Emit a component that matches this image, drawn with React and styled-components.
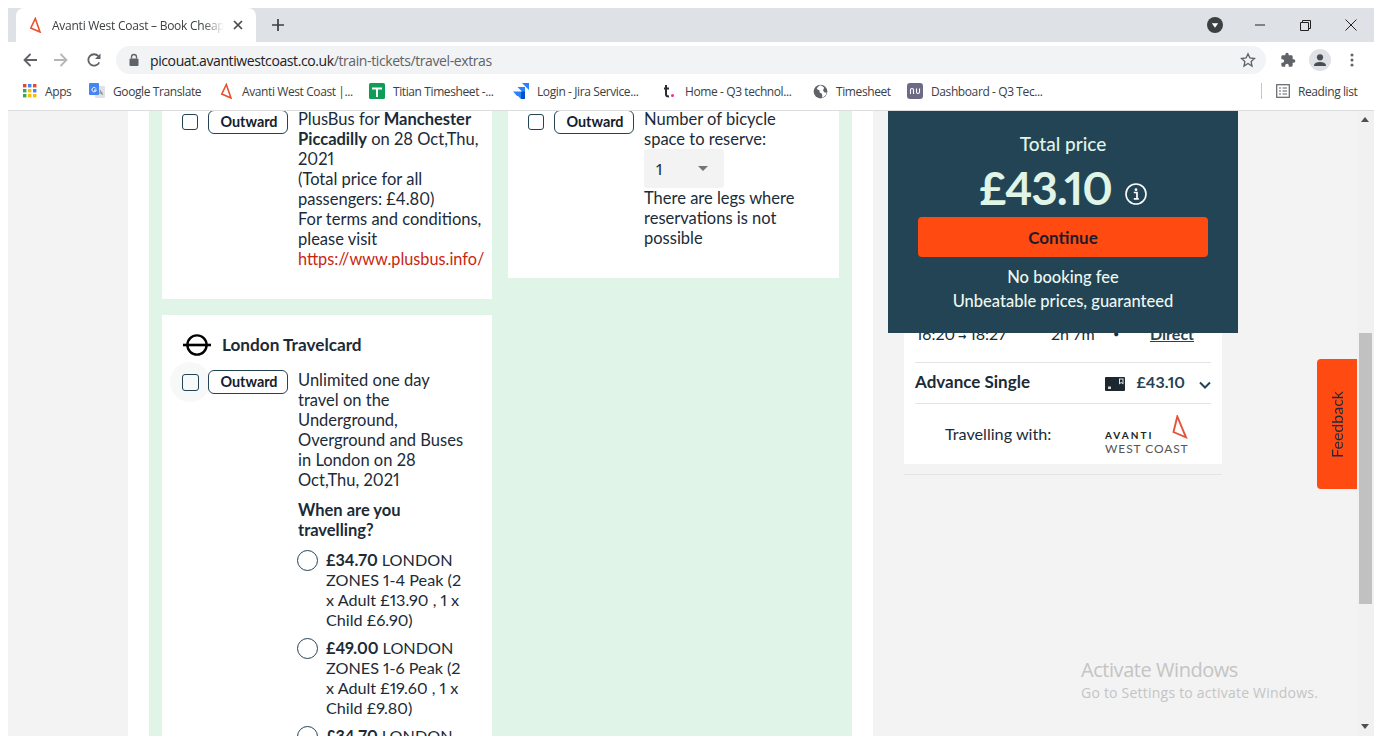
import React from 'react';
import styled, { createGlobalStyle } from 'styled-components';

const Global = createGlobalStyle`
  html, body { margin: 0; padding: 0; background: #fff; height: 100%; overflow: hidden; }
  body { font-family: "Lato", "Liberation Sans", sans-serif; }
`;

const Frame = styled.div`
  width: 1382px; height: 744px; padding: 8px 8px 8px 8px; box-sizing: border-box;
  display: flex; flex-direction: column; position: relative; overflow: hidden;
`;

/* ---------- browser chrome ---------- */
const TabStrip = styled.div`
  height: 34px; background: #dee1e6; display: flex; align-items: stretch; padding-left: 8px; flex: none;
`;
const Tab = styled.div`
  width: 240px; background: #fff; border-radius: 8px 8px 0 0; display: flex; align-items: center;
  padding: 0 10px 0 11px; box-sizing: border-box; position: relative;
`;
const TabTitle = styled.span`
  font: 12px "Open Sans", sans-serif; color: #3c4043; margin-left: 9px; width: 172px; white-space: nowrap; overflow: hidden;
  -webkit-mask-image: linear-gradient(90deg, #000 88%, transparent);
  mask-image: linear-gradient(90deg, #000 88%, transparent);
  letter-spacing: -0.25px;
`;
const IconSlot = styled.span`
  display: inline-flex; align-items: center; justify-content: center; flex: none;
  width: ${p => p.$w || 16}px; height: ${p => p.$h || 16}px; margin-left: ${p => p.$ml || 0}px;
`;
const StarSlot = styled(IconSlot)`
  margin-left: auto;
`;
const WindowControls = styled.div`
  margin-left: auto; display: flex; align-items: center; padding-right: 17px;
`;
const Toolbar = styled.div`
  height: 36px; display: flex; align-items: center; padding: 0 0 0 14px; box-sizing: border-box; background: #fff; flex: none;
`;
const Omnibox = styled.div`
  width: 1150px; height: 28px; border-radius: 14px; background: #f1f3f4; margin-left: 14px;
  display: flex; align-items: center; padding: 0 10px 0 12px; box-sizing: border-box;
`;
const Url = styled.span`
  font: 14px "Open Sans", sans-serif; color: #202124; margin-left: 10px; letter-spacing: -0.4px; white-space: nowrap;
  span { color: #5f6368; }
`;
const Bookmarks = styled.div`
  height: 33px; display: flex; align-items: center; padding: 0 0 6px 15px; border-bottom: 1px solid #dadce0; flex: none; background: #fff; box-sizing: border-box;
`;
const Bookmark = styled.div`
  display: flex; align-items: center; margin-right: ${p => p.$mr ?? 16}px; margin-left: ${p => p.$ml || 0}px; flex: none;
`;
const BookmarkText = styled.span`
  font: 12px "Open Sans", sans-serif; color: #3c4043; margin-left: 8px; width: ${p => p.$w}px; white-space: nowrap; letter-spacing: -0.4px;
`;
const Separator = styled.div`
  width: 1px; height: 16px; background: #c4c7c9; margin-left: auto;
`;

/* ---------- page ---------- */
const Viewport = styled.div`
  flex: 1; min-height: 0; display: flex; position: relative; overflow: hidden; color: #1b2b38;
  font-size: 16.5px; line-height: 20px; font-variant-numeric: proportional-nums;
`;
const Gutter = styled.div`
  width: 120px; background: #f3f3f3; flex: none;
`;
const Main = styled.div`
  width: 745px; background: #fff; padding: 0 21px; box-sizing: border-box; flex: none;
`;
const Green = styled.div`
  height: 100%; background: #e0f4e8; padding: 0 13px; box-sizing: border-box; display: flex; gap: 16px; align-items: flex-start;
`;
const Column = styled.div`
  width: ${p => p.$w}px; display: flex; flex-direction: column; gap: 16px; flex: none;
`;
const Card = styled.div`
  background: #fff; padding: ${p => p.$pad}; margin-top: ${p => p.$mt || 0}px; display: flex; flex-direction: column;
`;
const TitleRow = styled.div`
  display: flex; align-items: center; gap: 11px; font-weight: 700; font-size: 17.2px; margin: 0 0 14px 1px;
`;
const Row = styled.div`
  display: flex; align-items: flex-start;
`;
const Check = styled.span`
  width: 16px; height: 16px; border: 1.5px solid #224455; border-radius: 3px; box-sizing: border-box; flex: none; margin-top: 4px; background: #fff; position: relative;
  ${p => p.$halo && `
    &::before { content: ""; position: absolute; left: -13.5px; top: -13.5px; width: 40px; height: 40px; border-radius: 50%; background: #f6f9f8; }
    &::after { content: ""; position: absolute; inset: -1.5px; border: 1.5px solid #224455; border-radius: 3px; background: #f8faf9; }
  `}
`;
const Badge = styled.span`
  width: 80px; height: 24px; margin: 0 10px; border: 1px solid #224455; border-radius: 6px; box-sizing: border-box; flex: none; position: relative; background: #fff;
  display: flex; align-items: center; justify-content: center; font-size: 14.4px; font-weight: 700; color: #14202c; padding-left: 2px;
`;
const Text = styled.div`
  white-space: nowrap; width: 194px; flex: none; margin-top: ${p => p.$mt || 0}px;
`;
const Link = styled.span`
  color: #c9260f; font-size: 16.3px;
`;
const Question = styled.div`
  font-weight: 700; margin: 10px 0;
`;
const Option = styled.div`
  display: flex; gap: 8px; margin-bottom: 8px; font-size: 16.2px;
`;
const Radio = styled.span`
  width: 21px; height: 21px; border: 1.5px solid #224455; border-radius: 50%; box-sizing: border-box; flex: none; margin-left: -1px;
`;
const Select = styled.div`
  width: 80px; height: 39px; background: #f3f3f3; border-radius: 3px; display: flex; align-items: center; padding-left: 12px; box-sizing: border-box; position: relative; font-size: 16px;
  &::after { content: ""; position: absolute; left: 54px; top: 17px; border: 5px solid transparent; border-top: 5px solid #757575; border-bottom: 0; }
`;

const Sidebar = styled.div`
  width: 484px; background: #f3f3f3; flex: none; padding-left: 31px; box-sizing: border-box; position: relative;
`;
const Summary = styled.div`
  width: 318px; background: #fff; padding: 213px 11px 0; box-sizing: border-box; height: 353px;
`;
const JourneyRow = styled.div`
  display: flex; align-items: center; height: 20px; padding-left: 1px; margin-bottom: 18px; font-size: 16px;
`;
const JourneyCell = styled.span`
  width: ${p => p.$w}px; flex: none; white-space: nowrap; font-size: ${p => p.$fs || 16}px;
`;
const TimeArrow = styled.span`
  font: 700 10px "DejaVu Sans", sans-serif; margin: 0 3px;
`;
const Direct = styled.span`
  font-weight: 700; text-decoration: underline; color: #224455;
`;
const FareRow = styled.div`
  display: flex; align-items: center; height: 40px; border-top: 1px solid #e4e4e4; border-bottom: 1px solid #e4e4e4; font-weight: 700;
`;
const FareName = styled.span`
  margin-right: auto; font-size: 17px; margin-bottom: 3px;
`;
const RailcardSlot = styled.span`
  display: inline-flex; margin-top: 1px;
`;
const FarePrice = styled.span`
  color: #224455; margin: 0 14px 3px 12px; font-size: 16px;
`;
const ChevronSlot = styled.span`
  display: inline-flex; margin-top: 3px;
`;
const OperatorRow = styled.div`
  display: flex; align-items: center; height: 60px; padding-left: 30px; font-size: 16.2px;
`;
const OperatorLabel = styled.span`
  margin-right: auto;
`;
const Logo = styled.div`
  position: relative; width: 84px; height: 44px; margin-right: 22px; color: #222; flex: none;
  svg { position: absolute; left: 67px; top: 3px; }
`;
const LogoTop = styled.div`
  position: absolute; left: 0; top: 17px; font: 700 10px/12px "Lato", sans-serif; letter-spacing: 2px;
`;
const LogoBottom = styled.div`
  position: absolute; left: 0; top: 30px; font: 400 12px/13px "Lato", sans-serif; letter-spacing: 0.9px; white-space: nowrap; color: #555;
`;
const Rule = styled.div`
  width: 318px; height: 1px; background: #e4e4e4; margin-top: 10px;
`;
const PricePanel = styled.div`
  position: absolute; left: 15px; top: 0; width: 350px; height: 222px; background: #224455; color: #e0f4e8; padding: 21px 30px 0; box-sizing: border-box;
  display: flex; flex-direction: column; align-items: center;
`;
const PanelLabel = styled.div`
  font-size: 19px; line-height: 24px; font-weight: 500;
`;
const PriceLine = styled.div`
  display: flex; justify-content: center; gap: 13px; width: 290px; height: 50px; margin-top: 7px; margin-bottom: 4px;
`;
const Price = styled.span`
  font-size: 46px; line-height: 50px; font-weight: 700; letter-spacing: -1.2px;
`;
const InfoIcon = styled.span`
  display: inline-flex; margin-top: 20px; height: 22px;
`;
const Continue = styled.button`
  width: 290px; height: 40px; background: #ff4b12; border: 0; border-radius: 4px; color: #1b1b2b; font: 700 17px "Lato", sans-serif; flex: none;
`;
const PanelNote = styled.div`
  font-size: 16.5px; line-height: 24px; font-weight: 500; color: #eef8f2;
  margin-top: ${p => p.$mt || 0}px;
`;
const Scrollbar = styled.div`
  width: 17px; background: #f1f1f1; flex: none; position: relative;
`;
const Thumb = styled.div`
  position: absolute; left: 2px; top: 222px; width: 13px; height: 271px; background: #c1c1c1;
`;
const Arrow = styled.div`
  position: absolute; left: 4px; ${p => p.$up ? 'top: 6px; border-bottom: 5px solid #505050;' : 'bottom: 7px; border-top: 5px solid #505050;'}
  border-left: 4.5px solid transparent; border-right: 4.5px solid transparent;
`;
const Feedback = styled.div`
  position: absolute; left: 1309px; top: 248px; width: 40px; height: 130px; background: #ff4b12; border-radius: 4px 0 0 4px;
  display: flex; align-items: center; justify-content: center;
  span { writing-mode: vertical-rl; transform: rotate(180deg); font-size: 16px; color: #1b2b38; }
`;
const Activate = styled.div`
  position: absolute; left: 1073px; top: 546px; color: #c4c4c4; font-family: "Open Sans", sans-serif; white-space: nowrap;
  div:first-child { font-size: 20px; line-height: 26px; letter-spacing: -0.45px; }
  div:last-child { font-size: 14px; line-height: 20px; letter-spacing: 0.22px; }
`;

/* ---------- icons ---------- */
const AvantiMark = ({ s = 16 }) => (
  <svg width={s} height={s} viewBox="0 0 16 16"><path d="M8.3 1.5 L3.8 11 L13 15 Z" fill="none" stroke="#e8502e" strokeWidth="1.6" /></svg>
);
const Back = ({ c = '#5f6368' }) => (
  <svg width="16" height="16" viewBox="0 0 16 16"><path d="M15 8H2.5M8.5 2 2.5 8l6 6" fill="none" stroke={c} strokeWidth="1.8" /></svg>
);
const Forward = () => (
  <svg width="16" height="16" viewBox="0 0 16 16"><path d="M1 8h12.5M7.5 2l6 6-6 6" fill="none" stroke="#b4b7ba" strokeWidth="1.8" /></svg>
);
const Reload = () => (
  <svg width="16" height="16" viewBox="0 0 16 16"><path d="M13.2 10.3A5.7 5.7 0 1 1 12.4 4.3" fill="none" stroke="#5f6368" strokeWidth="1.8" /><path d="M14.5 1.5V7H9z" fill="#5f6368" /></svg>
);
const Lock = () => (
  <svg width="12" height="14" viewBox="0 0 12 14"><rect x="1.5" y="5.5" width="9" height="7.5" rx="1" fill="#5f6368" /><path d="M3.5 5.5V4a2.5 2.5 0 0 1 5 0v1.5" fill="none" stroke="#5f6368" strokeWidth="1.3" /></svg>
);
const Star = () => (
  <svg width="16" height="16" viewBox="0 0 24 24"><path d="M12 2.8l2.9 6.2 6.8.8-5 4.6 1.3 6.7L12 17.2l-6 3.9 1.3-6.7-5-4.6 6.8-.8z" fill="none" stroke="#5f6368" strokeWidth="2" /></svg>
);
const Puzzle = () => (
  <svg width="16" height="16" viewBox="0 0 24 24"><path d="M20.5 11H19V7a2 2 0 0 0-2-2h-4V3.5a2.5 2.5 0 0 0-5 0V5H4a2 2 0 0 0-2 2v3.8h1.5a2.7 2.7 0 0 1 0 5.4H2V20a2 2 0 0 0 2 2h3.8v-1.5a2.7 2.7 0 0 1 5.4 0V22H17a2 2 0 0 0 2-2v-4h1.5a2.5 2.5 0 0 0 0-5z" fill="#5f6368" /></svg>
);
const Avatar = () => (
  <svg width="22" height="22" viewBox="0 0 22 22"><circle cx="11" cy="11" r="11" fill="#dee1e6" /><circle cx="11" cy="8.3" r="3.1" fill="#4a4d51" /><path d="M5 16.5c0-2.6 3.4-3.6 6-3.6s6 1 6 3.6V17H5z" fill="#4a4d51" /></svg>
);
const Dots = () => (
  <svg width="4" height="14" viewBox="0 0 4 14"><circle cx="2" cy="2" r="1.5" fill="#5f6368" /><circle cx="2" cy="7" r="1.5" fill="#5f6368" /><circle cx="2" cy="12" r="1.5" fill="#5f6368" /></svg>
);
const AppsGrid = () => {
  const colors = ['#ea4335', '#4285f4', '#ea4335', '#34a853', '#fbbc05', '#4285f4', '#34a853', '#fbbc05', '#fbbc05'];
  return (
    <svg width="14" height="14" viewBox="0 0 14 14">
      {colors.map((c, i) => <rect key={i} x={(i % 3) * 5} y={Math.floor(i / 3) * 5} width="3.4" height="3.4" fill={c} />)}
    </svg>
  );
};
const Translate = () => (
  <svg width="16" height="16" viewBox="0 0 16 16"><rect x="6" y="3" width="10" height="12" rx="1" fill="#dfe1e5" /><rect x="0" y="0" width="10" height="12" rx="1" fill="#4285f4" /><path d="M7 5.5a2.2 2.2 0 1 0 .3 1.6H5" fill="none" stroke="#fff" strokeWidth="1" /><path d="M11 7l2.5 5M9.5 10h4" stroke="#80868b" strokeWidth="1" /></svg>
);
const Titian = () => (
  <svg width="16" height="16" viewBox="0 0 16 16"><rect width="16" height="16" rx="1.5" fill="#0f9d58" /><path d="M3 5.5h10M8 5.5V14" stroke="#fff" strokeWidth="2" /></svg>
);
const Jira = () => (
  <svg width="16" height="16" viewBox="0 0 16 16"><path d="M9 0h7v7zM4.5 4H12v7.5zM0 8.5h8V16L5 13H4z" fill="#2684ff" /><path d="M8 8.5h4V16H8z" fill="#0052cc" /></svg>
);
const TLogo = () => (
  <svg width="12" height="14" viewBox="0 0 12 14"><path d="M3 1v9.5c0 1.5 1 2 3 2M1 4.5h5" fill="none" stroke="#2b2b36" strokeWidth="2" /><circle cx="9.5" cy="11.5" r="1.5" fill="#ef2f88" /></svg>
);
const Globe = () => (
  <svg width="15" height="15" viewBox="0 0 24 24"><circle cx="12" cy="12" r="11" fill="#5f6368" /><path d="M12 2c-3 1-5 3-6 6l4 2 1 4 3 1 1 4-1 3c4-1 7-4 8-8l-4-1-2-3 2-4c-2-2-4-3-6-4z" fill="#fff" /></svg>
);
const Nu = () => (
  <svg width="16" height="16" viewBox="0 0 16 16"><rect width="16" height="16" rx="3" fill="#6c6a85" /><path d="M3.5 11V7c0-2 3-2 3 0v4M9.5 5.5V9c0 2 3 2 3 0V5.5" fill="none" stroke="#fff" strokeWidth="1.1" /></svg>
);
const ReadingList = () => (
  <svg width="14" height="14" viewBox="0 0 14 14"><rect x=".7" y=".7" width="12.6" height="12.6" fill="none" stroke="#5f6368" strokeWidth="1.2" /><path d="M3 4h2M3 7h2M3 10h2M6.5 4h4.5M6.5 7h4.5M6.5 10h4.5" stroke="#5f6368" strokeWidth="1.2" /></svg>
);
const Roundel = () => (
  <svg width="28" height="22" viewBox="0 0 28 22"><circle cx="14" cy="11" r="9.6" fill="none" stroke="#000" strokeWidth="2.4" /><rect x="0" y="9.7" width="28" height="2.6" fill="#000" /></svg>
);
const Info = () => (
  <svg width="22" height="22" viewBox="0 0 22 22"><circle cx="11" cy="11" r="10" fill="none" stroke="#fff" strokeWidth="1.6" /><circle cx="11" cy="6.7" r="1.4" fill="#fff" /><path d="M8.8 9.5H12v6M8.8 15.8h5" fill="none" stroke="#fff" strokeWidth="1.7" /></svg>
);
const Railcard = () => (
  <svg width="20" height="14" viewBox="0 0 20 14"><rect width="20" height="14" rx="1" fill="#1d2730" /><path d="M14 1.5h4.5v6l-2.2-1.4L14 7.5z" fill="#e6e6e6" /><path d="M15 2.5h2.5v3.2l-1.2-.8-1.3.8z" fill="#1d2730" /><rect x="3" y="9.5" width="3" height="2.5" fill="#cfd4d8" /></svg>
);
const Chevron = () => (
  <svg width="12" height="8" viewBox="0 0 12 8"><path d="M1 1.5l5 5 5-5" fill="none" stroke="#224455" strokeWidth="2" /></svg>
);

export default function App() {
  return (
    <>
      <Global />
      <Frame>
        <TabStrip>
          <Tab>
            <AvantiMark />
            <TabTitle>Avanti West Coast – Book Cheap Train Tickets</TabTitle>
            <IconSlot $ml={6}>
              <svg width="10" height="10" viewBox="0 0 10 10"><path d="M1 1l8 8M9 1L1 9" stroke="#45484c" strokeWidth="1.7" /></svg>
            </IconSlot>
          </Tab>
          <IconSlot $w={16} $h={34} $ml={14}>
            <svg width="12" height="12" viewBox="0 0 12 12"><path d="M6 0v12M0 6h12" stroke="#3c4043" strokeWidth="1.7" /></svg>
          </IconSlot>
          <WindowControls>
            <IconSlot $w={16} $h={34}>
              <svg width="16" height="16" viewBox="0 0 16 16"><circle cx="8" cy="8" r="8" fill="#3c4043" /><path d="M4.8 6.3h6.4L8 10.8z" fill="#fff" /></svg>
            </IconSlot>
            <IconSlot $w={12} $ml={31}>
              <svg width="12" height="12" viewBox="0 0 12 12"><path d="M1 6h10" stroke="#222" strokeWidth="1" /></svg>
            </IconSlot>
            <IconSlot $w={12} $ml={33}>
              <svg width="11" height="11" viewBox="0 0 11 11"><path d="M.5 2.5h8v8h-8zM2.5 2.5V.5h8v8h-2" fill="none" stroke="#222" strokeWidth="1" /></svg>
            </IconSlot>
            <IconSlot $w={12} $ml={34}>
              <svg width="12" height="12" viewBox="0 0 12 12"><path d="M.5.5l11 11M11.5.5l-11 11" stroke="#222" strokeWidth="1" /></svg>
            </IconSlot>
          </WindowControls>
        </TabStrip>
        <Toolbar>
          <Back />
          <IconSlot $ml={15}><Forward /></IconSlot>
          <IconSlot $ml={17}><Reload /></IconSlot>
          <Omnibox>
            <Lock />
            <Url>picouat.avantiwestcoast.co.uk<span>/train-tickets/travel-extras</span></Url>
            <StarSlot><Star /></StarSlot>
          </Omnibox>
          <IconSlot $ml={14}><Puzzle /></IconSlot>
          <IconSlot $w={22} $h={22} $ml={13}><Avatar /></IconSlot>
          <IconSlot $w={4} $h={14} $ml={19}><Dots /></IconSlot>
        </Toolbar>
        <Bookmarks>
          <Bookmark><IconSlot $w={14}><AppsGrid /></IconSlot><BookmarkText $w={28}>Apps</BookmarkText></Bookmark>
          <Bookmark><IconSlot><Translate /></IconSlot><BookmarkText $w={89}>Google Translate</BookmarkText></Bookmark>
          <Bookmark><IconSlot><AvantiMark /></IconSlot><BookmarkText $w={111}>Avanti West Coast |...</BookmarkText></Bookmark>
          <Bookmark><IconSlot><Titian /></IconSlot><BookmarkText $w={104}>Titian Timesheet -...</BookmarkText></Bookmark>
          <Bookmark><IconSlot><Jira /></IconSlot><BookmarkText $w={108}>Login - Jira Service...</BookmarkText></Bookmark>
          <Bookmark><IconSlot><TLogo /></IconSlot><BookmarkText $w={111}>Home - Q3 technol...</BookmarkText></Bookmark>
          <Bookmark><IconSlot><Globe /></IconSlot><BookmarkText $w={55}>Timesheet</BookmarkText></Bookmark>
          <Bookmark $mr={0}><IconSlot><Nu /></IconSlot><BookmarkText $w={114}>Dashboard - Q3 Tec...</BookmarkText></Bookmark>
          <Separator />
          <Bookmark $mr={14} $ml={14}><IconSlot $w={14}><ReadingList /></IconSlot><BookmarkText $w={62}>Reading list</BookmarkText></Bookmark>
        </Bookmarks>
        <Viewport>
          <Gutter />
          <Main>
            <Green>
              <Column $w={330}>
                <Card $pad="39px 0 30px 20px" $mt={-40}>
                  <Row>
                    <Check />
                    <Badge>Outward</Badge>
                    <Text $mt={-1}>
                      PlusBus for <b>Manchester</b><br />
                      <b>Piccadilly</b> on 28 Oct,Thu,<br />
                      2021<br />
                      (Total price for all<br />
                      passengers: £4.80)<br />
                      For terms and conditions,<br />
                      please visit<br />
                      <Link>https://www.plusbus.info/</Link>
                    </Text>
                  </Row>
                </Card>
                <Card $pad="19px 0 0 20px">
                  <TitleRow><Roundel />London Travelcard</TitleRow>
                  <Row>
                    <Check $halo />
                    <Badge>Outward</Badge>
                    <Text>
                      Unlimited one day<br />
                      travel on the<br />
                      Underground,<br />
                      Overground and Buses<br />
                      in London on 28<br />
                      Oct,Thu, 2021
                      <Question>When are you<br />travelling?</Question>
                      <Option><Radio /><span><b>£34.70</b> LONDON<br />ZONES 1-4 Peak (2<br />x Adult £13.90 , 1 x<br />Child £6.90)</span></Option>
                      <Option><Radio /><span><b>£49.00</b> LONDON<br />ZONES 1-6 Peak (2<br />x Adult £19.60 , 1 x<br />Child £9.80)</span></Option>
                      <Option><Radio /><span><b>£34.70</b> LONDON<br />ZONES 1-4 Peak</span></Option>
                    </Text>
                  </Row>
                </Card>
              </Column>
              <Column $w={331}>
                <Card $pad="39px 0 30px 20px" $mt={-40}>
                  <Row>
                    <Check />
                    <Badge>Outward</Badge>
                    <Text $mt={-1}>
                      Number of bicycle<br />
                      space to reserve:
                      <Select>1</Select>
                      There are legs where<br />
                      reservations is not<br />
                      possible
                    </Text>
                  </Row>
                </Card>
              </Column>
            </Green>
          </Main>
          <Sidebar>
            <Summary>
              <JourneyRow>
                <JourneyCell $w={135}>16:20<TimeArrow>→</TimeArrow>18:27</JourneyCell>
                <JourneyCell $w={62}>2h 7m</JourneyCell>
                <JourneyCell $w={37} $fs={11}>•</JourneyCell>
                <Direct>Direct</Direct>
              </JourneyRow>
              <FareRow>
                <FareName>Advance Single</FareName>
                <RailcardSlot><Railcard /></RailcardSlot>
                <FarePrice>£43.10</FarePrice>
                <ChevronSlot><Chevron /></ChevronSlot>
              </FareRow>
              <OperatorRow>
                <OperatorLabel>Travelling with:</OperatorLabel>
                <Logo>
                  <svg width="16" height="24" viewBox="0 0 16 24"><path d="M5.3 1.5 L1.5 17 L14 22.3 Z" fill="none" stroke="#e2553a" strokeWidth="1.9" /></svg>
                  <LogoTop>AVANTI</LogoTop>
                  <LogoBottom>WEST COAST</LogoBottom>
                </Logo>
              </OperatorRow>
            </Summary>
            <Rule />
            <PricePanel>
              <PanelLabel>Total price</PanelLabel>
              <PriceLine>
                <Price>£43.10</Price>
                <InfoIcon><Info /></InfoIcon>
              </PriceLine>
              <Continue>Continue</Continue>
              <PanelNote $mt={8}>No booking fee</PanelNote>
              <PanelNote>Unbeatable prices, guaranteed</PanelNote>
            </PricePanel>
          </Sidebar>
          <Scrollbar>
            <Arrow $up />
            <Thumb />
            <Arrow />
          </Scrollbar>
          <Feedback><span>Feedback</span></Feedback>
          <Activate>
            <div>Activate Windows</div>
            <div>Go to Settings to activate Windows.</div>
          </Activate>
        </Viewport>
      </Frame>
    </>
  );
}
